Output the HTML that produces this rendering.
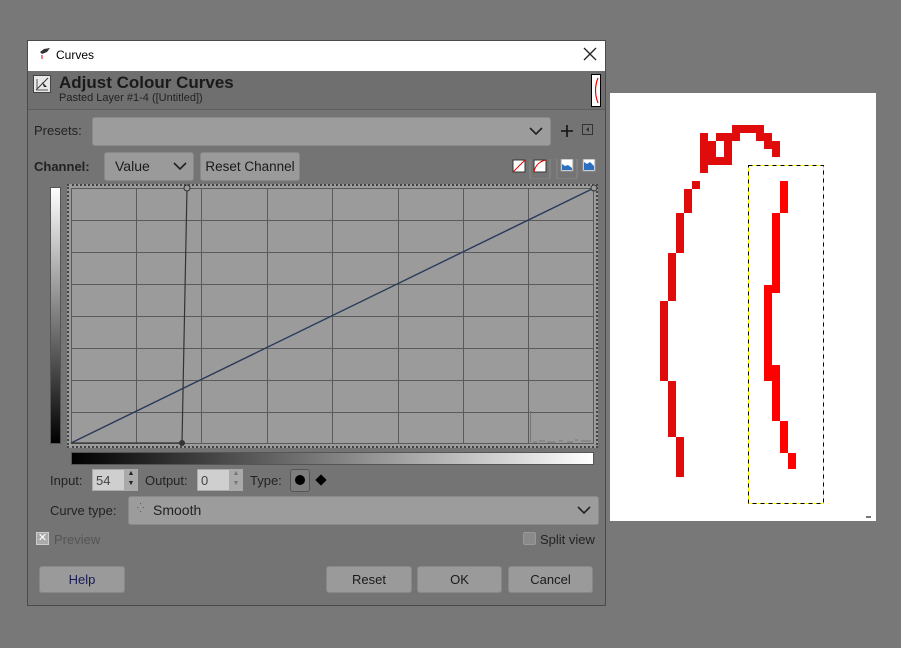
<!DOCTYPE html>
<html><head><meta charset="utf-8"><style>
*{margin:0;padding:0;box-sizing:border-box}
body{width:901px;height:648px;background:#787878;position:relative;overflow:hidden;font-family:"Liberation Sans","DejaVu Sans",sans-serif;font-size:13px;color:#1e1e1e}
.a{position:absolute}
.btn{position:absolute;background:#9a9a9a;border:1px solid #888;border-radius:3px;text-align:center;color:#1a1a1a;font-size:13px}
.lbl{position:absolute;color:#222;font-size:13px}
</style></head><body>
<div class="a" style="left:27px;top:40px;width:579px;height:566px;background:#747474;border:1px solid #4a4a4a"></div>
<div class="a" style="left:28px;top:41px;width:577px;height:30px;background:#fff"></div>
<svg class="a" style="left:38px;top:46px" width="14" height="14"><path d="M2 6 L6 3 L12 2 L9 6 L4 8Z" fill="#333"/><path d="M4 9 L4 13" stroke="#e00"/></svg>
<div class="a" style="left:56px;top:48px;font-size:12px;color:#000">Curves</div>
<svg class="a" style="left:583px;top:47px" width="14" height="14"><path d="M1 1 L13 13 M13 1 L1 13" stroke="#222" stroke-width="1.3"/></svg>
<div class="a" style="left:28px;top:71px;width:577px;height:39px;background:#6f6f6f;border-bottom:1px solid #5e5e5e"></div>
<div class="a" style="left:33px;top:75px;width:18px;height:18px;background:#e8e8e8;border:1px solid #444"></div>
<svg class="a" style="left:33px;top:75px" width="18" height="18"><path d="M3 15 L15 3" stroke="#333" stroke-width="1"/><path d="M4 4 V15 H15" stroke="#555" fill="none"/><path d="M9 7 L14 12 L11 12Z" fill="#222"/></svg>
<div class="a" style="left:59px;top:73px;font-size:17px;font-weight:bold;color:#1a1a1a">Adjust Colour Curves</div>
<div class="a" style="left:59px;top:92px;font-size:11px;color:#222">Pasted Layer #1-4 ([Untitled])</div>
<div class="a" style="left:591px;top:74px;width:10px;height:33px;background:#fff;border:1px solid #000"></div>
<svg class="a" style="left:592px;top:75px" width="9" height="31"><path d="M6 3 Q1 15 6 28" stroke="#e00" fill="none" stroke-width="1.2"/></svg>

<div class="lbl" style="left:34px;top:123px">Presets:</div>
<div class="a" style="left:92px;top:117px;width:459px;height:29px;background:#9c9c9c;border:1px solid #8a8a8a;border-radius:3px"></div>
<svg class="a" style="left:529px;top:126px" width="14" height="10"><path d="M1 2 L7 8 L13 2" stroke="#222" fill="none" stroke-width="1.6"/></svg>
<svg class="a" style="left:560px;top:124px" width="14" height="14"><path d="M7 1 V13 M1 7 H13" stroke="#111" stroke-width="1.6"/></svg>
<svg class="a" style="left:582px;top:124px" width="12" height="12"><rect x="0.5" y="0.5" width="10" height="10" fill="none" stroke="#333"/><path d="M7 3 L4 5.5 L7 8Z" fill="#333"/></svg>
<div class="lbl" style="left:34px;top:159px;font-weight:bold">Channel:</div>
<div class="btn" style="left:104px;top:152px;width:90px;height:29px;line-height:27px;text-align:left;padding-left:10px;font-size:14px">Value</div>
<svg class="a" style="left:173px;top:161px" width="14" height="10"><path d="M1 2 L7 8 L13 2" stroke="#222" fill="none" stroke-width="1.6"/></svg>
<div class="btn" style="left:200px;top:152px;width:100px;height:29px;line-height:27px;font-size:13.5px">Reset Channel</div>
<svg class="a" style="left:512px;top:159px" width="90" height="20">
<rect x="1" y="1" width="12" height="12" fill="#fff" stroke="#333"/><path d="M1 13 L13 1" stroke="#e00"/>
<rect x="18" y="-6" width="20" height="26" fill="none" stroke="#8a8a8a" rx="2"/>
<rect x="22" y="1" width="12" height="12" fill="#fff" stroke="#333"/><path d="M22 13 Q24 3 34 1" stroke="#e00" fill="none"/>
<rect x="45" y="-6" width="20" height="26" fill="none" stroke="#8a8a8a" rx="2"/>
<rect x="49" y="0" width="12" height="12" fill="#fff" stroke="#999"/><path d="M50 11 L50 5 L53 7 L56 6 L60 9 L60 11Z" fill="#2a6fc0"/>
<rect x="71" y="0" width="12" height="12" fill="#fff" stroke="#999"/><path d="M72 11 L72 3 L75 5 L78 3 L82 7 L82 11Z" fill="#2a6fc0"/>
</svg>

<div class="a" style="left:50px;top:187px;width:11px;height:257px;background:linear-gradient(#fff,#000);border:1px solid #555"></div>
<div class="a" style="left:71px;top:452px;width:523px;height:13px;background:linear-gradient(90deg,#000,#fff);border:1px solid #555"></div>
<div class="a" style="left:67px;top:184px;width:531px;height:264px;background:#9b9b9b;border:2px dotted #444"></div>
<svg class="a" style="left:67px;top:184px" width="531" height="264">
<g stroke="#5a5a5a" stroke-width="1">
<path d="M4 4.5H527M4 36.5H527M4 68.5H527M4 100.5H527M4 132.5H527M4 164.5H527M4 196.5H527M4 228.5H527M4 259.5H527"/>
<path d="M4.5 4V260M69.5 4V260M134.5 4V260M200.5 4V260M265.5 4V260M331.5 4V260M396.5 4V260M461.5 4V260M526.5 4V260"/>
</g>
<path d="M463.5 227V258" stroke="#777" stroke-width="1"/>
<path d="M466 258h4M472 257h6M480 258h8M492 257h4M500 258h6M508 256h3M514 257h10" stroke="#888" stroke-width="2"/>
<path d="M4 259 L527 4" stroke="#2a3a5a" stroke-width="1.4"/>
<path d="M4 259 L115 259 L120 4" stroke="#333" fill="none" stroke-width="1.2"/>
<circle cx="115" cy="259" r="3" fill="#333"/>
<circle cx="120" cy="4" r="3" fill="#9b9b9b" stroke="#333"/>
<circle cx="527" cy="4" r="3" fill="#9b9b9b" stroke="#333"/>
</svg>

<div class="lbl" style="left:50px;top:473px">Input:</div>
<div class="a" style="left:92px;top:469px;width:46px;height:22px;background:#cfcfcf;border:1px solid #aaa"></div>
<div class="a" style="left:96px;top:473px;color:#444">54</div>
<div class="a" style="left:124px;top:469px;width:14px;height:22px;background:#aaa;font-size:7px;line-height:10px;text-align:center;color:#222">▲<br>▼</div>
<div class="lbl" style="left:145px;top:473px">Output:</div>
<div class="a" style="left:197px;top:469px;width:46px;height:22px;background:#cfcfcf;border:1px solid #aaa"></div>
<div class="a" style="left:201px;top:473px;color:#444">0</div>
<div class="a" style="left:229px;top:469px;width:14px;height:22px;background:#aaa;font-size:7px;line-height:10px;text-align:center;color:#777">▲<br>▼</div>
<div class="lbl" style="left:250px;top:473px">Type:</div>
<div class="a" style="left:290px;top:469px;width:20px;height:23px;border:1px solid #555;border-radius:3px;background:#7e7e7e"></div>
<div class="a" style="left:295px;top:475px;width:10px;height:10px;border-radius:50%;background:#000"></div>
<div class="a" style="left:317px;top:476px;width:8px;height:8px;background:#000;transform:rotate(45deg)"></div>
<div class="lbl" style="left:50px;top:503px">Curve type:</div>
<div class="a" style="left:128px;top:496px;width:471px;height:29px;background:#9c9c9c;border:1px solid #8a8a8a;border-radius:3px"></div>
<div class="a" style="left:137px;top:503px;font-size:9px;color:#555">⁛</div>
<div class="a" style="left:153px;top:502px;font-size:14px;color:#222">Smooth</div>
<svg class="a" style="left:577px;top:505px" width="14" height="10"><path d="M1 2 L7 8 L13 2" stroke="#222" fill="none" stroke-width="1.6"/></svg>
<div class="a" style="left:36px;top:532px;width:13px;height:13px;background:#aaa;border:1px solid #ccc;color:#fff;font-size:11px;line-height:11px;text-align:center;font-weight:bold">✕</div>
<div class="a" style="left:54px;top:532px;color:#555">Preview</div>
<div class="a" style="left:523px;top:532px;width:13px;height:13px;background:#8a8a8a;border:1px solid #999;border-radius:2px"></div>
<div class="a" style="left:540px;top:532px;color:#222">Split view</div>
<div class="btn" style="left:39px;top:566px;width:86px;height:27px;line-height:25px;color:#1a1a5a">Help</div>
<div class="btn" style="left:326px;top:566px;width:86px;height:27px;line-height:25px">Reset</div>
<div class="btn" style="left:417px;top:566px;width:85px;height:27px;line-height:25px">OK</div>
<div class="btn" style="left:508px;top:566px;width:85px;height:27px;line-height:25px">Cancel</div>

<div class="a" style="left:610px;top:93px;width:266px;height:428px;background:#fff"></div>
<svg class="a" style="left:0;top:0" width="901" height="648">
<g fill="#e00b0b">
<rect x="732" y="125" width="32" height="8"/>
<rect x="700" y="133" width="8" height="40"/>
<rect x="716" y="133" width="24" height="8"/>
<rect x="756" y="133" width="16" height="8"/>
<rect x="708" y="141" width="8" height="24"/>
<rect x="724" y="141" width="8" height="24"/>
<rect x="764" y="141" width="16" height="8"/>
<rect x="772" y="149" width="8" height="8"/>
<rect x="700" y="157" width="32" height="8"/>
<rect x="692" y="181" width="8" height="8"/>
<rect x="684" y="189" width="8" height="24"/>
<rect x="676" y="213" width="8" height="40"/>
<rect x="668" y="253" width="8" height="48"/>
<rect x="660" y="301" width="8" height="80"/>
<rect x="668" y="381" width="8" height="56"/>
<rect x="676" y="437" width="8" height="40"/>
</g>
<g fill="#ff0000">
<rect x="780" y="181" width="8" height="32"/>
<rect x="772" y="213" width="8" height="80"/>
<rect x="764" y="285" width="8" height="96"/>
<rect x="772" y="365" width="8" height="56"/>
<rect x="780" y="421" width="8" height="32"/>
<rect x="788" y="453" width="8" height="16"/>
</g>
<rect x="748.5" y="165.5" width="75" height="338" fill="none" stroke="#ff0" stroke-width="1"/>
<rect x="748.5" y="165.5" width="75" height="338" fill="none" stroke="#000" stroke-width="1" stroke-dasharray="4 4"/>
<path d="M866 517h5" stroke="#777" stroke-width="2"/>
</svg>
</body></html>
